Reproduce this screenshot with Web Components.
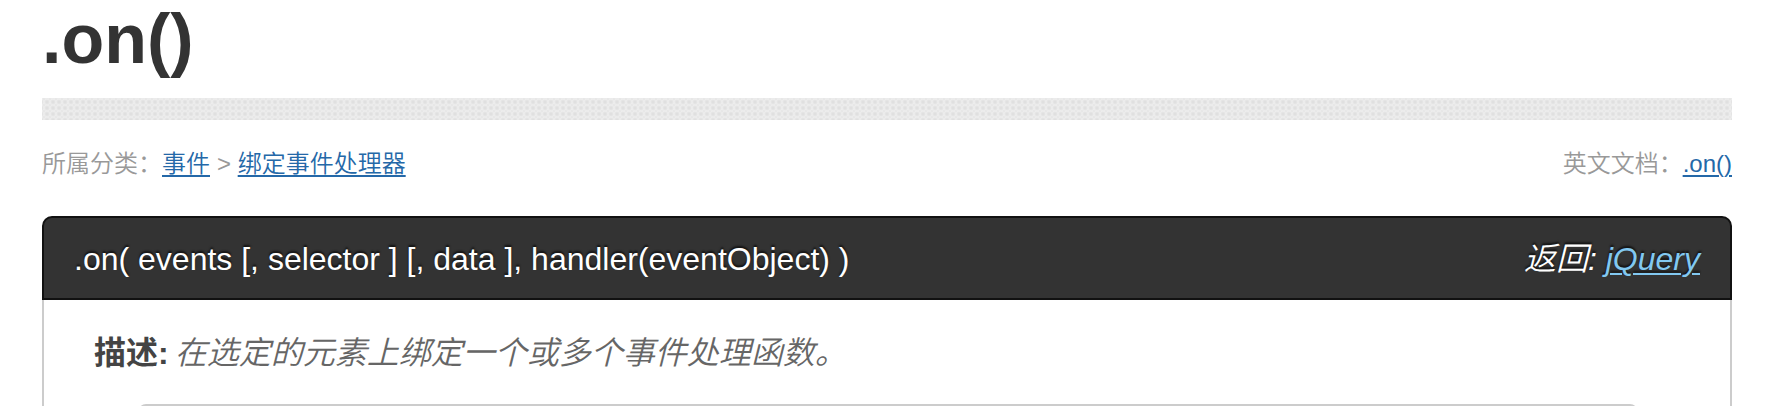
<!DOCTYPE html>
<html lang="zh-CN">
<head>
<meta charset="utf-8">
<title>.on() | jQuery API</title>
<style>
  body { margin: 0; background: #fff; font-family: "Liberation Sans", "Noto Sans CJK SC", sans-serif; font-weight: 350; }
</style>
</head>
<body>
<api-page>
  <page-title>.on()</page-title>
  <meta-bar>
    <category-trail>
      <text-link href="#events">事件</text-link>
      <text-link href="#event-handler-attachment">绑定事件处理器</text-link>
    </category-trail>
    <source-doc slot="end"><text-link href="#on">.on()</text-link></source-doc>
  </meta-bar>
  <method-entry>
    <span slot="signature">.on( events [, selector ] [, data ], handler(eventObject) )</span>
    <text-link slot="returns" href="#jquery">jQuery</text-link>
    <span slot="description">在选定的元素上绑定一个或多个事件处理函数。</span>
    <signature-box></signature-box>
  </method-entry>
</api-page>
<script>
const define = (name, html) => {
  const template = document.createElement('template');
  template.innerHTML = html;
  customElements.define(name, class extends HTMLElement {
    constructor() {
      super();
      this.attachShadow({ mode: 'open' }).append(template.content.cloneNode(true));
    }
  });
};

define('api-page', `
  <style>
    :host { display: flex; flex-direction: column; box-sizing: border-box; height: 100vh; overflow: hidden; padding: 0 46px 0 42px; }
  </style>
  <slot></slot>`);

define('page-title', `
  <style>
    :host { display: block; flex: none; color: #333; }
    h1 { margin: 0; font-size: 70px; line-height: 78px; font-weight: bold; }
    .rule { height: 22px; margin-top: 20px; background-color: #eeeeee;
      background-image: radial-gradient(circle, #e0e0e0 1px, transparent 3px), radial-gradient(circle, #e4e4e4 0, transparent 2px);
      background-size: 6px 6px; background-position: 2px 1px, 5px 4px; }
  </style>
  <h1><slot></slot></h1>
  <div class="rule"></div>`);

define('meta-bar', `
  <style>
    :host { display: flex; flex: none; justify-content: space-between; padding: 26px 0 34px; font-size: 24px; line-height: 36px; color: #999; }
  </style>
  <slot></slot><slot name="end"></slot>`);

define('category-trail', `
  <style>
    :host { display: flex; }
    ::slotted(:last-child)::before { content: ">"; margin: 0 0 0 7px; }
  </style>
  <span>所属分类：</span><slot></slot>`);

define('source-doc', `
  <style>
    :host { display: flex; }
  </style>
  <span>英文文档：</span><slot></slot>`);

customElements.define('text-link', class extends HTMLElement {
  connectedCallback() {
    if (this.shadowRoot) return;
    this.attachShadow({ mode: 'open' }).innerHTML = `
      <style>
        :host { display: inline; }
        a { color: var(--link-color, #2468a8); text-decoration: underline; text-decoration-thickness: 2px; text-underline-offset: 3px; }
      </style>
      <a><slot></slot></a>`;
    this.shadowRoot.querySelector('a').href = this.getAttribute('href');
  }
});

define('method-entry', `
  <style>
    :host { display: flex; flex-direction: column; flex: 1; font-size: 32px; }
    h2 { display: flex; justify-content: space-between; margin: 0; padding: 17px 30px 15px; border: 2px solid #111; border-radius: 10px 10px 0 0;
      background: #333; color: #fff; font-size: 32px; line-height: 48px; font-weight: 350; text-shadow: 0 -2px 2px #111; }
    .returns { font-style: italic; --link-color: #82c8f0; }
    .body { flex: 1; display: flex; flex-direction: column; padding: 29px 92px 0 94px; border: solid #ccc; border-width: 0 2px; }
    p { display: flex; gap: 6px; margin: 0 -44px 27px; line-height: 48px; color: #444; }
    strong { font-weight: 700; }
    em { color: #666; }
  </style>
  <h2><slot name="signature"></slot><span class="returns">返回: <slot name="returns"></slot></span></h2>
  <div class="body">
    <p><strong>描述:</strong><em><slot name="description"></slot></em></p>
    <slot></slot>
  </div>`);

define('signature-box', `
  <style>
    :host { display: block; flex: 1 0 20px; border: 2px solid #ccc; border-radius: 8px 8px 0 0; }
  </style>`);
</script>
</body>
</html>
